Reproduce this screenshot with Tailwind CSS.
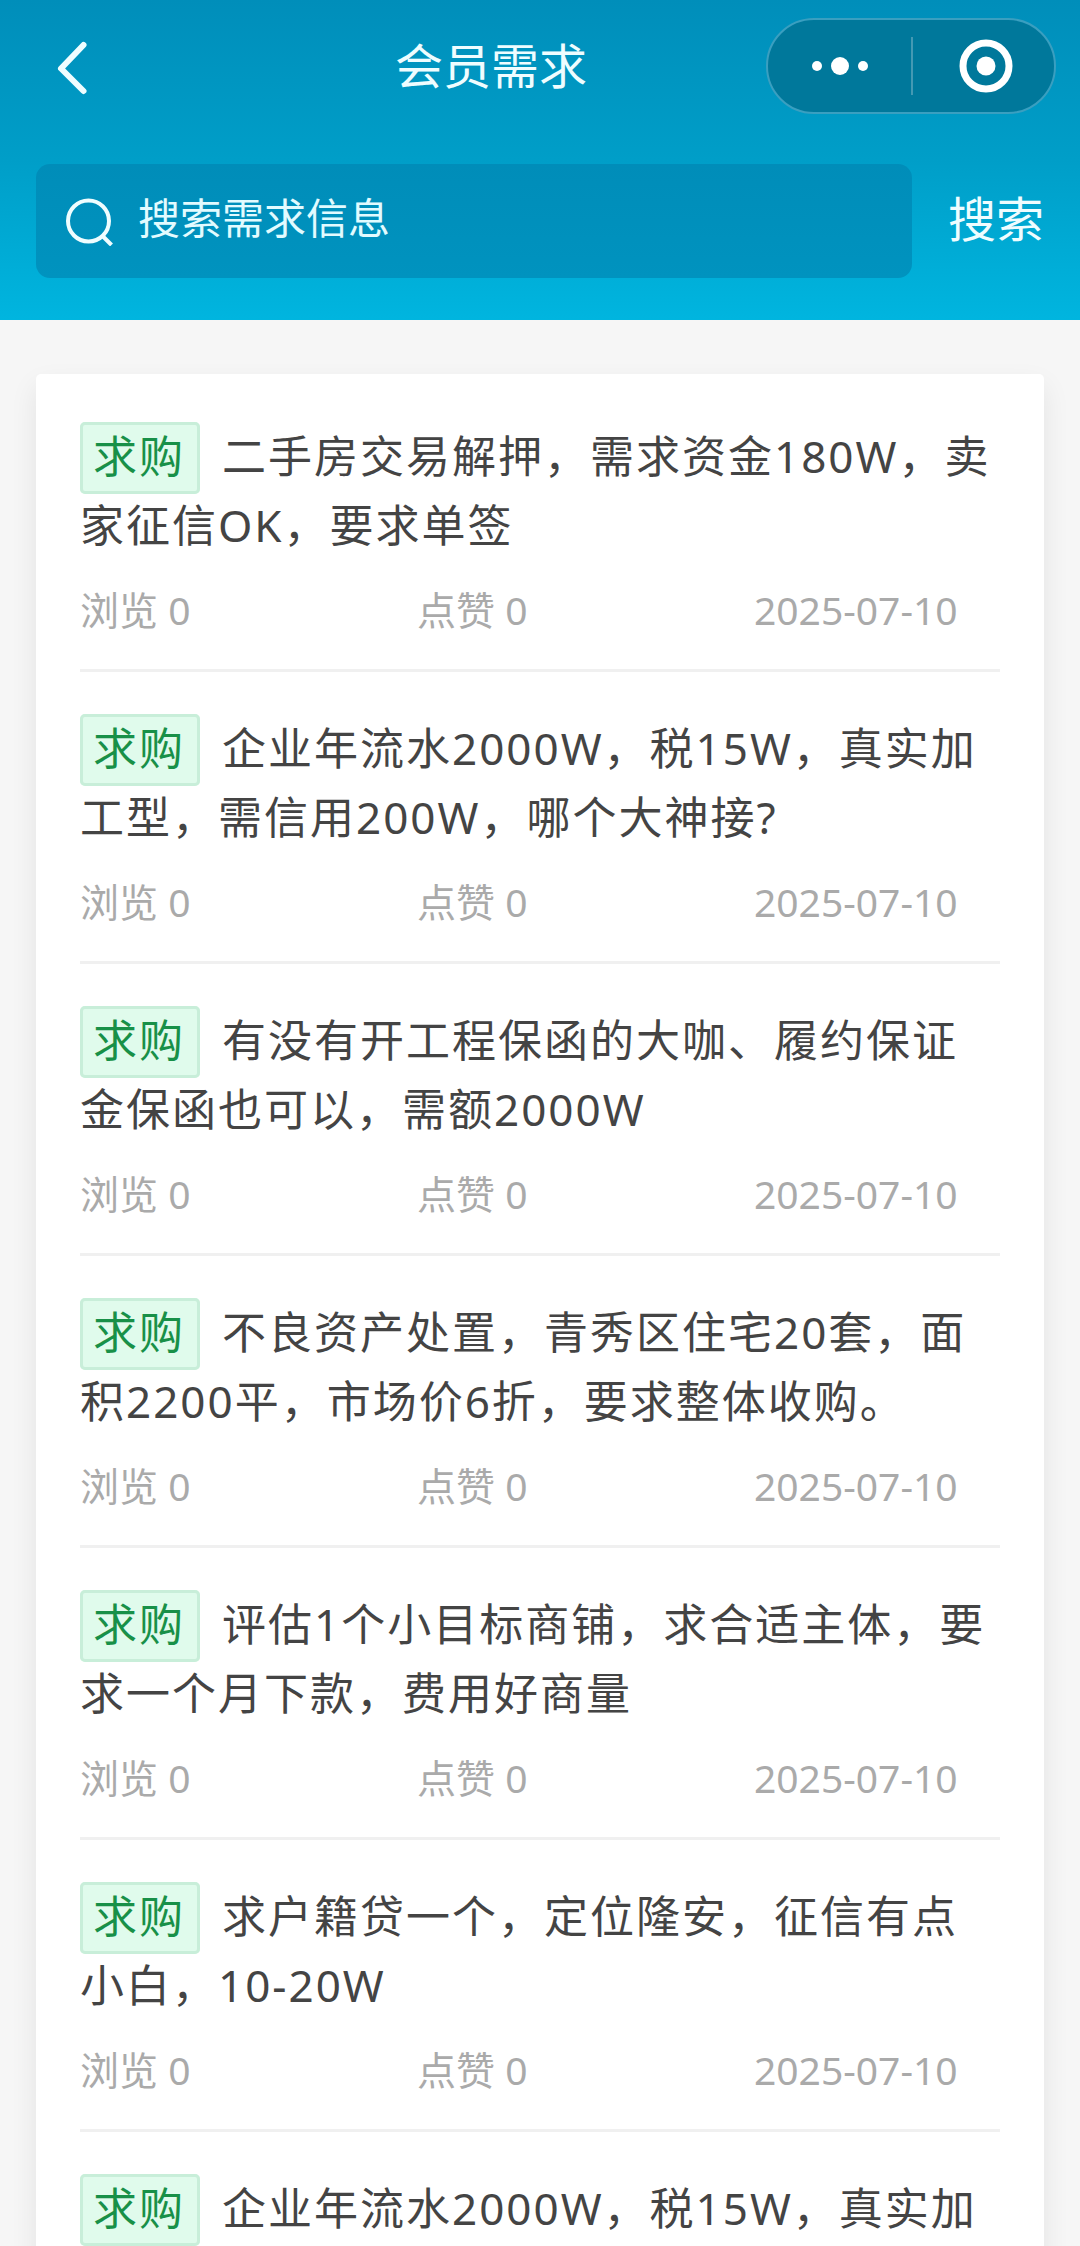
<!DOCTYPE html>
<html lang="zh-CN">
<head>
<meta charset="utf-8">
<meta name="viewport" content="width=device-width, initial-scale=1">
<title>会员需求</title>
<script src="https://cdn.jsdelivr.net/npm/@tailwindcss/browser@4"></script>
</head>
<body class="flex h-screen flex-col overflow-hidden bg-[#f6f6f6] font-['Noto_Sans','Noto_Sans_CJK_SC',sans-serif]">
  <header class="shrink-0 bg-linear-to-b from-[#008eba] via-[#009ec8] to-[#00b5df] pb-[42px] text-[#effdff]">
    <nav class="flex items-center pt-[18px] pr-6 pl-9">
      <button type="button" aria-label="返回" class="flex h-24 w-[180px] items-center pt-1 pl-5">
        <svg class="h-14 w-8" viewBox="0 0 32 56" fill="none" stroke="currentColor" stroke-width="6" stroke-linecap="round" stroke-linejoin="round"><path d="M27.500 5L5 28.500L27.500 51"/></svg>
      </button>
      <h1 class="flex-1 text-center text-[48px] leading-[72px]">会员需求</h1>
      <div class="flex h-24 w-[290px] items-center rounded-full border-2 border-[#3a9fc0] bg-[#00789b] text-white">
        <button type="button" aria-label="更多" class="flex h-full w-[143px] items-center justify-center">
          <svg class="h-5 w-14" viewBox="0 0 56 20" fill="currentColor"><circle cx="5" cy="10" r="5"/><circle cx="28" cy="10" r="9"/><circle cx="51" cy="10" r="5"/></svg>
        </button>
        <span class="h-[58px] w-0.5 bg-[#4499b3]"></span>
        <button type="button" aria-label="关闭" class="flex h-full flex-1 items-center justify-center pl-1">
          <svg class="size-[54px]" viewBox="0 0 54 54"><circle cx="27" cy="27" r="23" fill="none" stroke="currentColor" stroke-width="7"/><circle cx="27" cy="27" r="9.500" fill="currentColor"/></svg>
        </button>
      </div>
    </nav>
    <form class="mt-[50px] flex items-center gap-9 px-9" onsubmit="return false">
      <label class="flex h-[114px] min-w-0 flex-1 items-center gap-6 rounded-[14px] bg-linear-to-b from-[#008db9] to-[#0093bf] pl-7">
        <svg class="size-[50px] shrink-0" viewBox="0 0 50 50" fill="none" stroke="currentColor" stroke-width="4"><circle cx="24.500" cy="25" r="20.500"/><path d="M38.500 40L47.500 49"/></svg>
        <input type="text" aria-label="搜索需求信息" placeholder="搜索需求信息" class="h-[60px] min-w-0 flex-1 bg-transparent pb-2 text-[42px] outline-none placeholder:text-[#e2fbff] placeholder:opacity-100">
      </label>
      <button type="submit" class="shrink-0 pb-1 text-[48px] leading-[72px]">搜索</button>
    </form>
  </header>
  <main class="min-h-0 flex-1 overflow-hidden px-9 pt-[54px]">
    <ul class="rounded-[5px] bg-white px-11 pt-1.5 shadow-[0_12px_28px_rgba(0,0,0,0.08)]">
      <li class="border-b-3 border-[#f0f0f0] pt-[42px] pb-8">
        <h2 class="text-[44px] leading-[69px] tracking-[2px] text-[#444]"><span class="mr-[22px] rounded-[5px] border-3 border-[#c8eed9] bg-[#e0fbec] pt-px pr-3 pb-[5px] pl-2.5 text-[#189048]">求购</span>二手房交易解押，需求资金180W，卖家征信OK，要求单签</h2>
        <div class="mt-[23px] grid grid-cols-[337fr_337fr_246fr] text-[39px] leading-[54px] text-[#aaa]"><span>浏览 0</span><span>点赞 0</span><time datetime="2025-07-10">2025-07-10</time></div>
      </li>
      <li class="border-b-3 border-[#f0f0f0] pt-[42px] pb-8">
        <h2 class="text-[44px] leading-[69px] tracking-[2px] text-[#444]"><span class="mr-[22px] rounded-[5px] border-3 border-[#c8eed9] bg-[#e0fbec] pt-px pr-3 pb-[5px] pl-2.5 text-[#189048]">求购</span>企业年流水2000W，税15W，真实加工型，需信用200W，哪个大神接?</h2>
        <div class="mt-[23px] grid grid-cols-[337fr_337fr_246fr] text-[39px] leading-[54px] text-[#aaa]"><span>浏览 0</span><span>点赞 0</span><time datetime="2025-07-10">2025-07-10</time></div>
      </li>
      <li class="border-b-3 border-[#f0f0f0] pt-[42px] pb-8">
        <h2 class="text-[44px] leading-[69px] tracking-[2px] text-[#444]"><span class="mr-[22px] rounded-[5px] border-3 border-[#c8eed9] bg-[#e0fbec] pt-px pr-3 pb-[5px] pl-2.5 text-[#189048]">求购</span>有没有开工程保函的大咖、履约保证金保函也可以，需额2000W</h2>
        <div class="mt-[23px] grid grid-cols-[337fr_337fr_246fr] text-[39px] leading-[54px] text-[#aaa]"><span>浏览 0</span><span>点赞 0</span><time datetime="2025-07-10">2025-07-10</time></div>
      </li>
      <li class="border-b-3 border-[#f0f0f0] pt-[42px] pb-8">
        <h2 class="text-[44px] leading-[69px] tracking-[2px] text-[#444]"><span class="mr-[22px] rounded-[5px] border-3 border-[#c8eed9] bg-[#e0fbec] pt-px pr-3 pb-[5px] pl-2.5 text-[#189048]">求购</span>不良资产处置，青秀区住宅20套，面积2200平，市场价6折，要求整体收购。</h2>
        <div class="mt-[23px] grid grid-cols-[337fr_337fr_246fr] text-[39px] leading-[54px] text-[#aaa]"><span>浏览 0</span><span>点赞 0</span><time datetime="2025-07-10">2025-07-10</time></div>
      </li>
      <li class="border-b-3 border-[#f0f0f0] pt-[42px] pb-8">
        <h2 class="text-[44px] leading-[69px] tracking-[2px] text-[#444]"><span class="mr-[22px] rounded-[5px] border-3 border-[#c8eed9] bg-[#e0fbec] pt-px pr-3 pb-[5px] pl-2.5 text-[#189048]">求购</span>评估1个小目标商铺，求合适主体，要求一个月下款，费用好商量</h2>
        <div class="mt-[23px] grid grid-cols-[337fr_337fr_246fr] text-[39px] leading-[54px] text-[#aaa]"><span>浏览 0</span><span>点赞 0</span><time datetime="2025-07-10">2025-07-10</time></div>
      </li>
      <li class="border-b-3 border-[#f0f0f0] pt-[42px] pb-8">
        <h2 class="text-[44px] leading-[69px] tracking-[2px] text-[#444]"><span class="mr-[22px] rounded-[5px] border-3 border-[#c8eed9] bg-[#e0fbec] pt-px pr-3 pb-[5px] pl-2.5 text-[#189048]">求购</span>求户籍贷一个，定位隆安，征信有点小白，10-20W</h2>
        <div class="mt-[23px] grid grid-cols-[337fr_337fr_246fr] text-[39px] leading-[54px] text-[#aaa]"><span>浏览 0</span><span>点赞 0</span><time datetime="2025-07-10">2025-07-10</time></div>
      </li>
      <li class="pt-[42px] pb-8">
        <h2 class="text-[44px] leading-[69px] tracking-[2px] text-[#444]"><span class="mr-[22px] rounded-[5px] border-3 border-[#c8eed9] bg-[#e0fbec] pt-px pr-3 pb-[5px] pl-2.5 text-[#189048]">求购</span>企业年流水2000W，税15W，真实加</h2>
      </li>
    </ul>
  </main>
</body>
</html>
